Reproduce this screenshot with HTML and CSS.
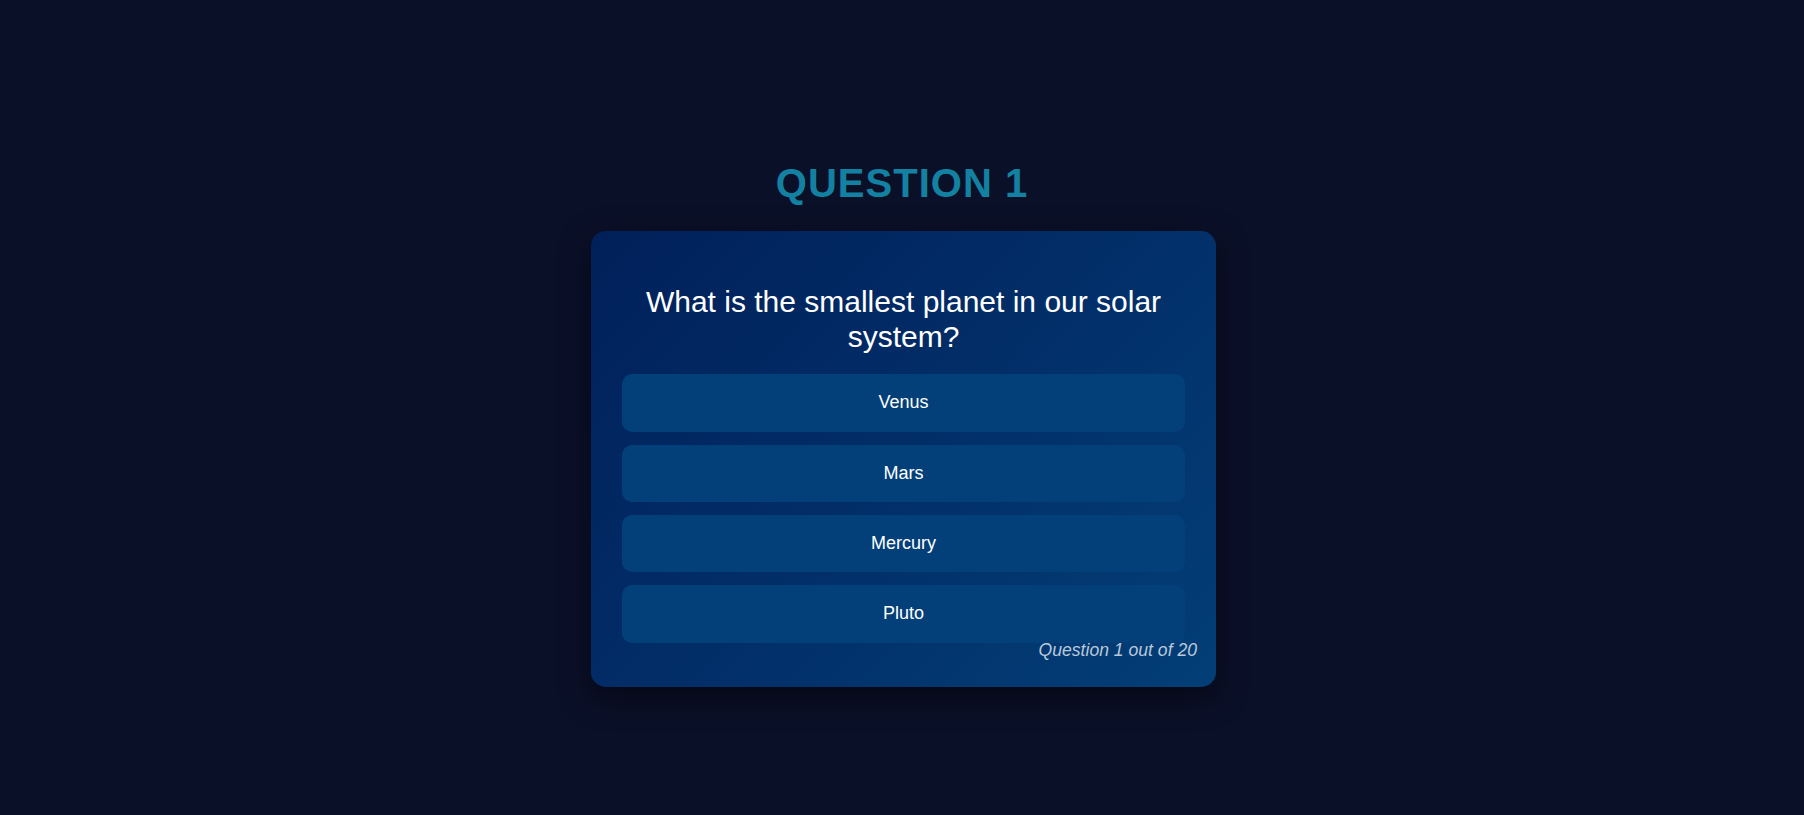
FILE: index.html
```html
<!DOCTYPE html>
<html lang="en">
<head>
<meta charset="utf-8">
<title>Quiz</title>
<link rel="stylesheet" href="styles.css">
</head>
<body>
<main class="quiz">
  <h1 class="quiz-title">QUESTION 1</h1>
  <section class="card">
    <h2 class="question">What is the smallest planet in our solar system?</h2>
    <div class="options">
      <button class="option">Venus</button>
      <button class="option">Mars</button>
      <button class="option">Mercury</button>
      <button class="option">Pluto</button>
    </div>
    <p class="progress">Question 1 out of 20</p>
  </section>
</main>
</body>
</html>
```
FILE: styles.css
```css
* { box-sizing: border-box; }

html, body {
  margin: 0;
  height: 100%;
}

body {
  background: #0b1029;
  font-family: "Liberation Sans", Arial, sans-serif;
  color: #ffffff;
}

.quiz {
  min-height: 100vh;
  padding-top: 32px;
  padding-left: 3px;
  display: flex;
  flex-direction: column;
  align-items: center;
  justify-content: center;
}

.quiz-title {
  margin: 0 0 25px -3px;
  font-size: 40px;
  font-weight: 700;
  letter-spacing: 1px;
  color: #1382a2;
  line-height: 46px;
}

.card {
  width: 625px;
  padding: 32px 19px 29px;
  border-radius: 15px;
  background: linear-gradient(135deg, #01205a 0%, #022e68 50%, #033f77 100%);
  box-shadow: 0 10px 30px rgba(0, 0, 0, 0.55);
}

.question {
  margin: 22px 12px 20px;
  font-size: 30px;
  font-weight: 400;
  line-height: 34.5px;
  text-align: center;
}

.options {
  display: flex;
  flex-direction: column;
  gap: 12.8px;
  padding: 0 12px;
}

.option {
  display: block;
  width: 100%;
  padding: 18px;
  border: none;
  border-radius: 10px;
  background: #03407a;
  color: #ffffff;
  font-family: "Liberation Sans", Arial, sans-serif;
  font-size: 18px;
  line-height: 21.6px;
  text-align: center;
}

.progress {
  margin: 0;
  font-size: 17.6px;
  line-height: 15px;
  font-style: italic;
  text-align: right;
  color: #b9c8dc;
}
```
